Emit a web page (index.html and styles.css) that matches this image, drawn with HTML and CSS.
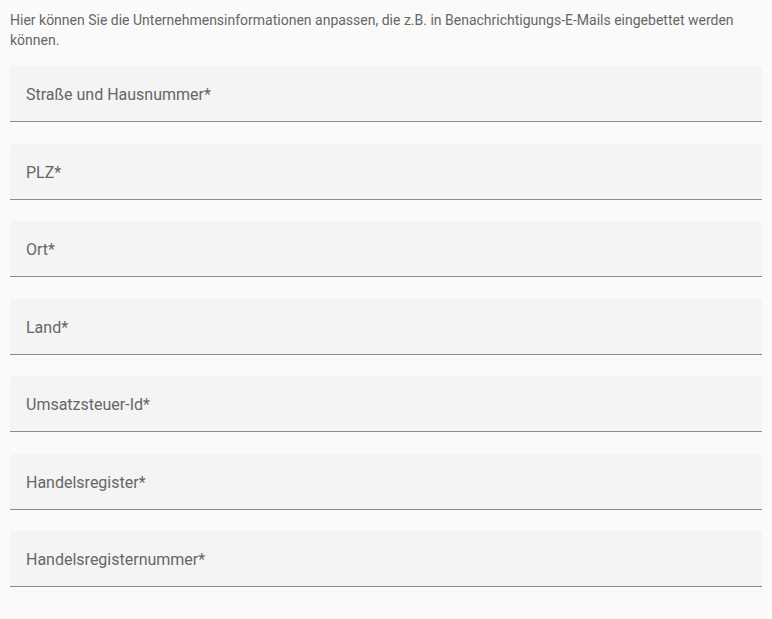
FILE: index.html
```html
<!DOCTYPE html>
<html lang="de">
<head>
<meta charset="utf-8">
<link rel="stylesheet" href="styles.css">
</head>
<body>
<div class="page">
  <p class="intro">Hier können Sie die Unternehmensinformationen anpassen, die z.B. in Benachrichtigungs-E-Mails eingebettet werden können.</p>
  <form class="form">
    <div class="field"><span class="label">Straße und Hausnummer*</span></div>
    <div class="field"><span class="label">PLZ*</span></div>
    <div class="field"><span class="label">Ort*</span></div>
    <div class="field"><span class="label">Land*</span></div>
    <div class="field"><span class="label">Umsatzsteuer-Id*</span></div>
    <div class="field"><span class="label">Handelsregister*</span></div>
    <div class="field"><span class="label">Handelsregisternummer*</span></div>
  </form>
</div>
</body>
</html>
```
FILE: styles.css
```css
html, body {
  margin: 0;
  padding: 0;
  background: #fafafa;
  font-family: Roboto, "Liberation Sans", sans-serif;
}
.page {
  padding: 10px;
}
.intro {
  margin: 0 0 16px 0;
  font-size: 14px;
  line-height: 20px;
  color: #666666;
}
.form {
  display: flex;
  flex-direction: column;
  gap: 21.5px;
}
.field {
  height: 55px;
  background: #f4f4f4;
  border-bottom: 1px solid #8c8c8c;
  border-radius: 4px 4px 0 0;
  display: flex;
  align-items: center;
  padding: 0 16px;
  box-sizing: content-box;
}
.label {
  font-size: 16px;
  color: #666666;
  line-height: 20px;
  padding-top: 3px;
}
```
